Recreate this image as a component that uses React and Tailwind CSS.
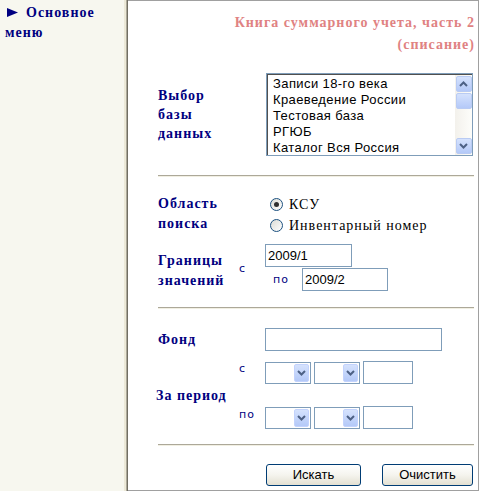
import React from "react";

const serif = { fontFamily: '"Liberation Serif", "Times New Roman", serif' };
const sans = { fontFamily: '"Liberation Sans", Arial, sans-serif' };
const verd = { fontFamily: '"DejaVu Sans", Verdana, sans-serif' };

function Chevron({ up = false }) {
  return (
    <svg width="9" height="6" viewBox="0 0 9 6">
      <path
        d={up ? "M1 5 L4.5 1.5 L8 5" : "M1 1 L4.5 4.5 L8 1"}
        fill="none"
        stroke="#4d6185"
        strokeWidth="2"
      />
    </svg>
  );
}

function ScrollBtn({ children }) {
  return (
    <div className="w-[16px] h-[16px] rounded-[2px] border border-[#b9cbf3] bg-gradient-to-b from-[#d5e2fd] to-[#b4c9f8] flex items-center justify-center">
      {children}
    </div>
  );
}

function Select() {
  return (
    <div className="w-[46px] h-[22px] border border-[#7f9db9] bg-white flex justify-end items-center pr-[1px]">
      <div className="w-[15px] h-[18px] rounded-[2px] border border-[#c3d3fd] bg-gradient-to-b from-[#d5e2fd] to-[#b4c9f8] flex items-center justify-center">
        <Chevron />
      </div>
    </div>
  );
}

function Radio({ checked }) {
  return (
    <div className="w-[13px] h-[13px] rounded-full border border-[#1c5180] bg-gradient-to-br from-[#dcdcd5] to-white flex items-center justify-center">
      {checked && <div className="w-[5px] h-[5px] rounded-full bg-[#2f2f2f]" />}
    </div>
  );
}

function Hr({ className = "" }) {
  return (
    <div className={"ml-[30px] w-[316px] h-[2px] border-t border-[#aca899] border-b border-b-[#f1efe2] " + className} />
  );
}

function Label({ children, className = "" }) {
  return (
    <div
      className={"text-[14px] font-bold text-[#000080] tracking-[1px] leading-[19px] " + className}
      style={serif}
    >
      {children}
    </div>
  );
}

function Small({ children, className = "" }) {
  return (
    <div className={"text-[11px] text-[#000080] tracking-[1px] leading-[13px] " + className} style={verd}>
      {children}
    </div>
  );
}

function Input({ w, value = "", className = "" }) {
  return (
    <div
      className={"h-[23px] border border-[#7f9db9] bg-white text-[13px] text-black leading-[21px] pl-[2px] " + className}
      style={{ width: w, ...sans }}
    >
      {value}
    </div>
  );
}

function Button({ children, w }) {
  return (
    <div
      className="h-[22px] rounded-[3px] border border-[#003c74] bg-gradient-to-b from-white via-[#f5f4ee] to-[#e3e0d2] flex items-center justify-center text-[13px] text-black"
      style={{ width: w, ...sans }}
    >
      {children}
    </div>
  );
}

export default function App() {
  const dbs = [
    "Записи 18-го века",
    "Краеведение России",
    "Тестовая база",
    "РГЮБ",
    "Каталог Вся Россия",
  ];
  return (
    <div className="w-[479px] h-[491px] flex bg-white overflow-hidden">
      {/* left frame */}
      <div className="w-[124px] h-full bg-[#f7f7ef] pl-[5px] pt-[3px]">
        <div
          className="text-[14px] font-bold text-[#000080] tracking-[1px] leading-[20px]"
          style={serif}
        >
          <svg width="11" height="9" viewBox="0 0 11 9" className="inline-block ml-[2px] mr-[8px] align-[0px]">
            <path d="M0 0 L11 4.5 L0 9 Z" fill="#000080" />
          </svg>
          Основное меню
        </div>
      </div>
      {/* divider */}
      <div className="w-[2px] h-full bg-[#ece9d8]" />
      <div className="w-[1px] h-full bg-[#aca899]" />
      <div className="w-[1px] h-full bg-[#716f64]" />
      {/* right frame */}
      <div className="flex-1 h-full border-t border-r border-b border-[#a0a0a0] flex flex-col">
        {/* title */}
        <div
          className="mt-[11px] pr-[3px] text-right text-[14px] font-bold text-[#e08282] tracking-[1px] leading-[22px]"
          style={serif}
        >
          Книга суммарного учета, часть 2
          <br />
          (списание)
        </div>

        {/* database */}
        <div className="mt-[17px] flex items-center">
          <Label className="ml-[30px] w-[108px]">
            Выбор
            <br />
            базы
            <br />
            данных
          </Label>
          <div className="w-[207px] h-[83px] border border-[#7f9db9] flex">
            <div className="flex-1 border-t border-l border-[#505050] pl-[5px] pt-[1px]">
              {dbs.map((d) => (
                <div key={d} className="text-[13px] text-black leading-[16px] tracking-[0.4px] whitespace-nowrap" style={sans}>
                  {d}
                </div>
              ))}
            </div>
            <div className="w-[17px] bg-gradient-to-r from-[#f3f1ec] to-[#fdfdfa] border-t border-[#505050] flex flex-col items-center pt-[1px] pb-[1px]">
              <ScrollBtn>
                <Chevron up />
              </ScrollBtn>
              <div className="mt-[1px]">
                <ScrollBtn />
              </div>
              <div className="flex-1" />
              <ScrollBtn>
                <Chevron />
              </ScrollBtn>
            </div>
          </div>
        </div>

        <Hr className="mt-[19px]" />

        {/* search area */}
        <div className="mt-[17px] flex">
          <Label className="ml-[30px] w-[112px] leading-[20px]">
            Область
            <br />
            поиска
          </Label>
          <div className="flex flex-col">
            <div className="flex items-center h-[20px]">
              <Radio checked />
              <span className="ml-[6px] text-[14px] text-black tracking-[1px]" style={serif}>
                КСУ
              </span>
            </div>
            <div className="flex items-center h-[20px] mt-[1px]">
              <Radio />
              <span className="ml-[6px] text-[14px] text-black tracking-[1px]" style={serif}>
                Инвентарный номер
              </span>
            </div>
          </div>
        </div>

        {/* bounds */}
        <div className="mt-[9px] flex">
          <Label className="ml-[30px] w-[81px] pt-[7px] leading-[20px]">
            Границы
            <br />
            значений
          </Label>
          <Small className="w-[26px] pt-[18px]">с</Small>
          <div className="flex flex-col">
            <Input w="87px" value="2009/1" />
            <div className="flex items-center mt-[1px]">
              <Small className="ml-[8px] w-[29px]">по</Small>
              <Input w="86px" value="2009/2" />
            </div>
          </div>
        </div>

        <Hr className="mt-[16px]" />

        {/* fond */}
        <div className="mt-[19px] flex items-center">
          <Label className="ml-[30px] w-[107px]">Фонд</Label>
          <Input w="177px" />
        </div>

        {/* period */}
        <div className="mt-[10px] flex items-center">
          <Label className="ml-[28px] w-[83px]">За период</Label>
          <div className="flex flex-col">
            <div className="flex items-center">
              <Small className="w-[26px] mb-[8px]">с</Small>
              <Select />
              <div className="ml-[3px]">
                <Select />
              </div>
              <Input w="50px" className="ml-[3px] h-[22px]" />
            </div>
            <div className="flex items-center mt-[22px]">
              <Small className="w-[26px] mb-[6px]">по</Small>
              <Select />
              <div className="ml-[3px]">
                <Select />
              </div>
              <Input w="50px" className="ml-[3px] h-[22px]" />
            </div>
          </div>
        </div>

        <Hr className="mt-[15px]" />

        {/* buttons */}
        <div className="mt-[18px] flex ml-[138px]">
          <Button w="95px">Искать</Button>
          <div className="ml-[21px]">
            <Button w="91px">Очистить</Button>
          </div>
        </div>
      </div>
    </div>
  );
}
